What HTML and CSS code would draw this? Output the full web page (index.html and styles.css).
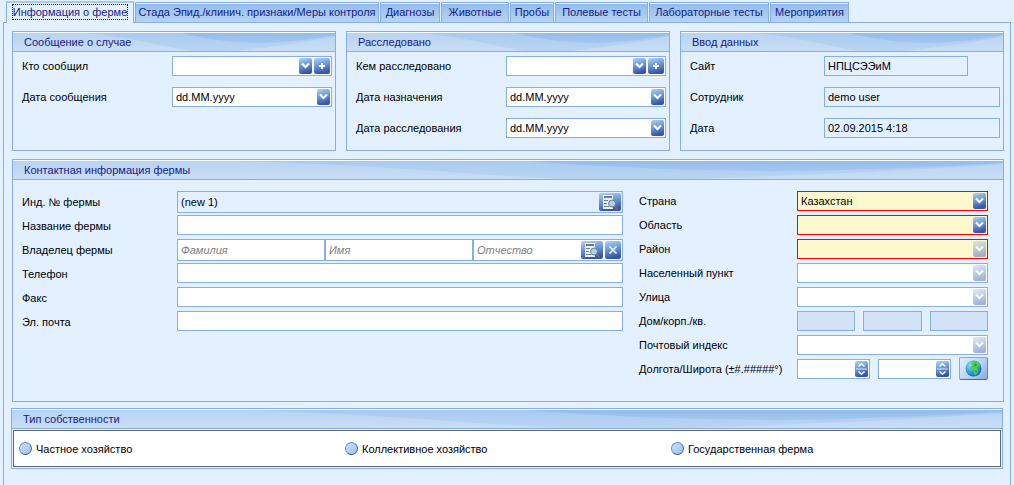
FILE: index.html
```
<!DOCTYPE html>
<html lang="ru">
<head>
<meta charset="utf-8">
<title>Информация о ферме</title>
<link rel="stylesheet" href="styles.css">
</head>
<body>
<svg class="defs" aria-hidden="true">
  <defs>
    <linearGradient id="btn" x1="0" y1="0" x2="0.25" y2="1">
      <stop offset="0" stop-color="#b4d3f6"/><stop offset="0.35" stop-color="#7fabe4"/><stop offset="0.65" stop-color="#5a86cc"/><stop offset="1" stop-color="#3a54a2"/>
    </linearGradient>
    <linearGradient id="base" x1="0" y1="0" x2="0" y2="1">
      <stop offset="0" stop-color="#b8d3f1"/><stop offset="1" stop-color="#c9ddf5"/>
    </linearGradient>
    <linearGradient id="mid" x1="0" y1="0" x2="0" y2="1">
      <stop offset="0" stop-color="#a8caf0"/><stop offset="1" stop-color="#bad5f3"/>
    </linearGradient>
    <linearGradient id="deep" x1="0" y1="0" x2="0" y2="1">
      <stop offset="0" stop-color="#94bdeb"/><stop offset="1" stop-color="#a4c7ee"/>
    </linearGradient>
    <radialGradient id="sea" cx="0.35" cy="0.3" r="0.8">
      <stop offset="0" stop-color="#8fe3fb"/><stop offset="0.5" stop-color="#35a3e4"/><stop offset="1" stop-color="#1557b4"/>
    </radialGradient>
  </defs>
  <symbol id="swoosh" viewBox="0 0 322 18" preserveAspectRatio="none">
    <rect width="322" height="18" fill="url(#base)"/>
    <path d="M72 0C115 3 145 13 178 18H222C260 14 300 8 322 3V0Z" fill="url(#mid)"/>
    <path d="M168 0C195 7 225 10 252 10C280 9 305 5 322 2V0Z" fill="url(#deep)"/>
  </symbol>
  <symbol id="arrow" viewBox="0 0 13 16">
    <rect width="13" height="16" rx="2" fill="url(#btn)"/>
    <path d="M3 5.500L6.500 9L10 5.500" fill="none" stroke="#fff" stroke-width="2.200"/>
  </symbol>
  <symbol id="plus" viewBox="0 0 16 16">
    <rect width="16" height="16" rx="2" fill="url(#btn)"/>
    <path d="M5 8H11M8 5V11" stroke="#fff" stroke-width="2"/>
  </symbol>
  <symbol id="cross" viewBox="0 0 16 18">
    <rect width="16" height="18" rx="2" fill="url(#btn)"/>
    <path d="M4.500 5.500L11.500 12.500M11.500 5.500L4.500 12.500" stroke="#fff" stroke-width="1.600"/>
  </symbol>
  <symbol id="search" viewBox="0 0 22 18">
    <rect width="22" height="18" rx="2" fill="url(#btn)"/>
    <path d="M4 2H14V16H4Z" fill="#e8eef5"/>
    <path d="M5 4H13" stroke="#747b83" stroke-width="2"/>
    <path d="M5 7.500H9M5 10.500H8M5 13.500H10" stroke="#747b83"/>
    <path d="M15.500 13L18.500 16.500" stroke="#6e6a66" stroke-width="2"/>
    <circle cx="13" cy="10.500" r="3.500" fill="#a9d2ee" stroke="#71808f"/>
  </symbol>
  <symbol id="spin" viewBox="0 0 13 16">
    <rect width="13" height="16" rx="2" fill="url(#btn)"/>
    <path d="M1 8H12" stroke="#dbe9fa"/>
    <path d="M3.500 5.500L6.500 2.800L9.500 5.500M3.500 10.500L6.500 13.200L9.500 10.500" fill="none" stroke="#fff" stroke-width="1.500"/>
  </symbol>
  <symbol id="globe" viewBox="0 0 17 17">
    <circle cx="8.500" cy="8.500" r="8" fill="url(#sea)"/>
    <path d="M8 1L12 1.300L15 4L14.500 7L13 6.500L11.500 8.500L13.500 10L12.500 13L10.500 15.500L9 13.500L9.500 10.500L6 10L5 7.500L7 5.500L6 4Z" fill="#4fd04a"/>
    <path d="M10 3L12 4L11 6L9 6.500ZM10 10L12 11L11 13Z" fill="#1f9a3a"/>
    <path d="M2 11L4.500 12L5 14.500L3.500 14Z" fill="#36b56a"/>
  </symbol>
</svg>

<nav class="tabs" role="tablist">
  <button class="tab tab-active" role="tab" aria-selected="true"><span>Информация о ферме</span></button>
  <button class="tab" role="tab">Стада Эпид./клинич. признаки/Меры контроля</button>
  <button class="tab" role="tab">Диагнозы</button>
  <button class="tab" role="tab">Животные</button>
  <button class="tab" role="tab">Пробы</button>
  <button class="tab" role="tab">Полевые тесты</button>
  <button class="tab" role="tab">Лабораторные тесты</button>
  <button class="tab" role="tab">Мероприятия</button>
</nav>

<main class="page">
  <div class="summary">
    <section class="group">
      <h2 class="group-title"><svg><use href="#swoosh"/></svg><span>Сообщение о случае</span></h2>
      <div class="rows">
        <label for="reporter">Кто сообщил</label>
        <div class="field"><select id="reporter"><option></option></select><span class="icons"><svg class="arrow"><use href="#arrow"/></svg><button class="icon-btn" aria-label="Добавить"><svg class="square"><use href="#plus"/></svg></button></span></div>
        <label for="report-date">Дата сообщения</label>
        <div class="field"><input id="report-date" type="text" value="dd.MM.yyyy"><span class="icons"><button class="icon-btn" aria-label="Календарь"><svg class="arrow"><use href="#arrow"/></svg></button></span></div>
      </div>
    </section>
    <section class="group">
      <h2 class="group-title"><svg><use href="#swoosh"/></svg><span>Расследовано</span></h2>
      <div class="rows">
        <label for="investigator">Кем расследовано</label>
        <div class="field"><select id="investigator"><option></option></select><span class="icons"><svg class="arrow"><use href="#arrow"/></svg><button class="icon-btn" aria-label="Добавить"><svg class="square"><use href="#plus"/></svg></button></span></div>
        <label for="assign-date">Дата назначения</label>
        <div class="field"><input id="assign-date" type="text" value="dd.MM.yyyy"><span class="icons"><button class="icon-btn" aria-label="Календарь"><svg class="arrow"><use href="#arrow"/></svg></button></span></div>
        <label for="invest-date">Дата расследования</label>
        <div class="field"><input id="invest-date" type="text" value="dd.MM.yyyy"><span class="icons"><button class="icon-btn" aria-label="Календарь"><svg class="arrow"><use href="#arrow"/></svg></button></span></div>
      </div>
    </section>
    <section class="group">
      <h2 class="group-title"><svg><use href="#swoosh"/></svg><span>Ввод данных</span></h2>
      <div class="rows rows-entry">
        <label for="site">Сайт</label>
        <div class="field readonly short"><input id="site" type="text" value="НПЦСЭЭиМ" readonly></div>
        <label for="officer">Сотрудник</label>
        <div class="field readonly"><input id="officer" type="text" value="demo user" readonly></div>
        <label for="entry-date">Дата</label>
        <div class="field readonly"><input id="entry-date" type="text" value="02.09.2015 4:18" readonly></div>
      </div>
    </section>
  </div>

  <section class="group">
    <h2 class="group-title"><svg><use href="#swoosh"/></svg><span>Контактная информация фермы</span></h2>
    <div class="contact">
      <div class="contact-rows">
        <label for="farm-id">Инд. № фермы</label>
        <div class="field tall readonly"><input id="farm-id" type="text" value="(new 1)" readonly><span class="icons"><button class="icon-btn" aria-label="Найти ферму"><svg class="search"><use href="#search"/></svg></button></span></div>
        <label for="farm-name">Название фермы</label>
        <div class="field"><input id="farm-name" type="text"></div>
        <label for="surname">Владелец фермы</label>
        <div class="owner">
          <div class="field tall"><input id="surname" type="text" placeholder="Фамилия"></div>
          <div class="field tall"><input type="text" placeholder="Имя" aria-label="Имя"></div>
          <div class="field tall"><input type="text" placeholder="Отчество" aria-label="Отчество"><span class="icons"><button class="icon-btn" aria-label="Найти владельца"><svg class="search"><use href="#search"/></svg></button><button class="icon-btn" aria-label="Очистить"><svg class="cross"><use href="#cross"/></svg></button></span></div>
        </div>
        <label for="phone">Телефон</label>
        <div class="field"><input id="phone" type="text"></div>
        <label for="fax">Факс</label>
        <div class="field"><input id="fax" type="text"></div>
        <label for="email">Эл. почта</label>
        <div class="field"><input id="email" type="text"></div>
      </div>
      <div class="contact-rows address">
        <label for="country">Страна</label>
        <div class="field required"><select id="country"><option>Казахстан</option></select><span class="icons"><svg class="arrow"><use href="#arrow"/></svg></span></div>
        <label for="region">Область</label>
        <div class="field required"><select id="region"><option></option></select><span class="icons"><svg class="arrow"><use href="#arrow"/></svg></span></div>
        <label for="district">Район</label>
        <div class="field required off"><select id="district" disabled><option></option></select><span class="icons"><svg class="arrow"><use href="#arrow"/></svg></span></div>
        <label for="town">Населенный пункт</label>
        <div class="field off"><select id="town" disabled><option></option></select><span class="icons"><svg class="arrow"><use href="#arrow"/></svg></span></div>
        <label for="street">Улица</label>
        <div class="field off"><select id="street" disabled><option></option></select><span class="icons"><svg class="arrow"><use href="#arrow"/></svg></span></div>
        <label for="house">Дом/корп./кв.</label>
        <div class="triple">
          <div class="field dim"><input id="house" type="text" disabled></div>
          <div class="field dim"><input type="text" aria-label="Корпус" disabled></div>
          <div class="field dim"><input type="text" aria-label="Квартира" disabled></div>
        </div>
        <label for="zip">Почтовый индекс</label>
        <div class="field off"><select id="zip" disabled><option></option></select><span class="icons"><svg class="arrow"><use href="#arrow"/></svg></span></div>
        <label for="longitude">Долгота/Широта (±#.#####°)</label>
        <div class="coords">
          <div class="field"><input id="longitude" type="text"><span class="icons"><button class="icon-btn" aria-label="Изменить долготу"><svg class="arrow"><use href="#spin"/></svg></button></span></div>
          <div class="field"><input type="text" aria-label="Широта"><span class="icons"><button class="icon-btn" aria-label="Изменить широту"><svg class="arrow"><use href="#spin"/></svg></button></span></div>
          <button class="map-btn" aria-label="Карта"><svg><use href="#globe"/></svg></button>
        </div>
      </div>
    </div>
  </section>

  <section class="group ownership">
    <h2 class="group-title"><svg><use href="#swoosh"/></svg><span>Тип собственности</span></h2>
    <div class="choices">
      <label><input type="radio" name="ownership">Частное хозяйство</label>
      <label><input type="radio" name="ownership">Коллективное хозяйство</label>
      <label><input type="radio" name="ownership">Государственная ферма</label>
    </div>
  </section>
</main>
</body>
</html>
```
FILE: styles.css
```
* { box-sizing: border-box; }

body {
  --line: #87aee6;
  --bg: #e2f0ff;
  --title: #15218a;
  margin: 0;
  min-height: 100vh;
  display: flex;
  flex-direction: column;
  background: var(--bg);
  color: #000;
  font: 11px/14px "Liberation Sans", Arial, sans-serif;
}

button, input, select { font: inherit; color: inherit; margin: 0; }
svg { display: block; }
.defs { position: absolute; width: 0; height: 0; }

/* Tabs */
.tabs {
  display: grid;
  grid-template-columns: 128px 244px 60px 68px 44px 93px 120px 79px;
  gap: 1px;
  align-items: end;
  height: 23px;
  padding-left: 6px;
}
.tab {
  height: 21px;
  padding: 0 0 2px;
  border: 1px solid var(--line);
  background: linear-gradient(#e8f3ff 1px, #94bdeb 1px, #b7d3f3);
  color: var(--title);
  text-align: center;
  white-space: nowrap;
}
.tab-active {
  height: 22px;
  padding-bottom: 3px;
  border-top: 2px solid #a9c9f1;
  border-bottom: 0;
  background: var(--bg);
  z-index: 1;
}
.tab-active span {
  display: inline-block;
  border: 1px dotted var(--title);
}

/* Page and groups */
.page {
  flex: 1;
  display: flex;
  flex-direction: column;
  gap: 8px;
  margin: -1px 3px 0;
  padding: 8px 6px 17px 8px;
  border: solid var(--line);
  border-width: 1px 1px 0;
}
.summary {
  display: grid;
  grid-template-columns: repeat(3, 1fr);
  gap: 10px;
}
.group { border: 1px solid var(--line); }
.group-title {
  display: grid;
  height: 20px;
  margin: 0;
  border-top: 1px solid #f4f9ff;
  border-bottom: 1px solid var(--line);
  color: var(--title);
  font-size: 11px;
  font-weight: normal;
  line-height: 18px;
}
.group-title > * { grid-area: 1 / 1; }
.group-title svg { width: 100%; height: 18px; }
.group-title span { padding-left: 11px; }

/* Form rows */
.rows {
  display: grid;
  grid-template-columns: 150px 1fr;
  gap: 11px 0;
  align-items: center;
  padding: 4px 3px 12px 9px;
}
.rows-entry { grid-template-columns: 134px 1fr; }
.short { margin-right: 32px; }

.field {
  display: grid;
  min-width: 0;
  height: 20px;
  border: 1px solid var(--line);
  background: #fff;
}
.field > * { grid-area: 1 / 1; min-width: 0; }
.field input, .field select {
  width: 100%;
  height: 100%;
  padding: 0 3px;
  border: 0;
  outline: 0;
  border-radius: 0;
  appearance: none;
  background: transparent;
}
.field ::placeholder { color: #808080; font-style: italic; opacity: 1; }
.tall { height: 22px; }
.readonly { background: var(--bg); }
.required { border-color: #f00; background: #fff8cf; }
.dim { background: #d2e3f7; }
.off .icons { opacity: 0.45; }

.icons {
  display: flex;
  gap: 2px;
  place-self: center end;
  padding-right: 1px;
}
.icon-btn { padding: 0; border: 0; background: none; }
.arrow { width: 13px; height: 16px; }
.square { width: 16px; height: 16px; }
.cross { width: 16px; height: 18px; }
.search { width: 22px; height: 18px; }

/* Contact details */
.contact {
  display: grid;
  grid-template-columns: 1fr 349px;
  gap: 16px;
  padding: 11px 15px 18px 9px;
}
.contact-rows {
  display: grid;
  grid-template-columns: 155px 1fr;
  grid-auto-rows: 24px;
  align-content: start;
}
.contact-rows > label { line-height: 22px; }
.address { grid-template-columns: 158px 1fr; }
.address > label { line-height: 20px; white-space: nowrap; }
.owner { display: grid; grid-template-columns: 148px 148px 1fr; }
.triple { display: grid; grid-template-columns: repeat(3, 1fr); gap: 8px; }
.coords { display: grid; grid-template-columns: 1fr 1fr 29px; gap: 8px; }
.map-btn {
  display: grid;
  place-items: center;
  height: 23px;
  margin-top: -2px;
  padding: 0;
  border: 1px solid #86a9dc;
  border-bottom-color: #4a66b0;
  border-right-color: #6582c2;
  border-radius: 2px;
  background: linear-gradient(135deg, #e4f0fd, #bcd5f6 50%, #87aae2);
}
.map-btn svg { width: 17px; height: 17px; }

/* Ownership */
.ownership { margin: -2px 1px 0 -1px; }
.choices {
  display: grid;
  grid-template-columns: repeat(3, 326px);
  align-items: center;
  height: 37px;
  margin: 1px;
  padding-left: 5px;
  border: 1px solid #646a72;
  background: #fff;
}
.choices label { display: flex; align-items: center; gap: 4px; }
.choices input {
  appearance: none;
  width: 13px;
  height: 13px;
  border: 1px solid #6a8fcc;
  border-bottom-color: #2f4a94;
  border-right-color: #4260a8;
  border-radius: 50%;
  background: linear-gradient(135deg, #c9e0fa, #9dbff0);
}
```
